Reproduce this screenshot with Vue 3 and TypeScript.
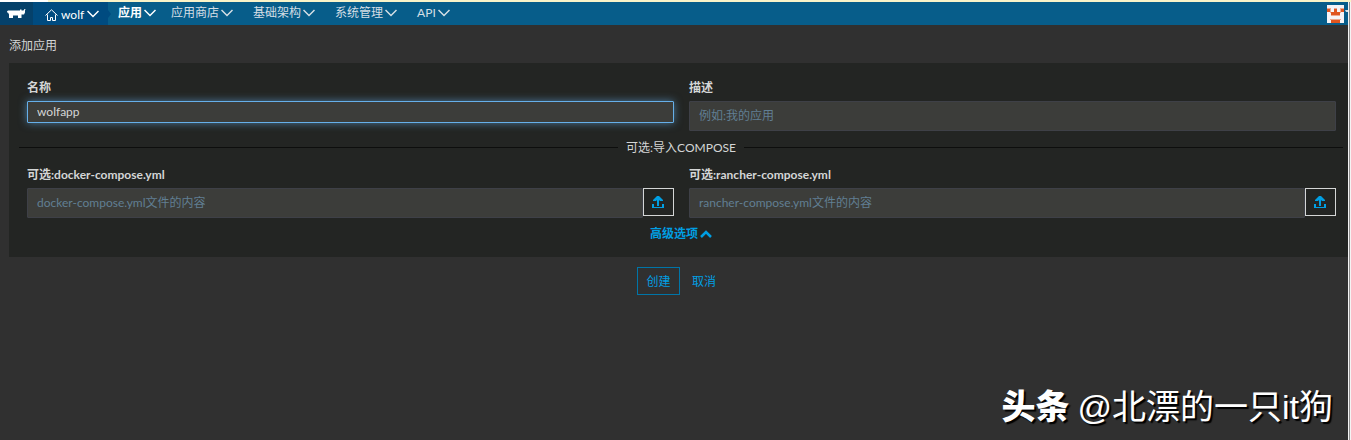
<script setup lang="ts">
import { ref } from 'vue'

interface NavItem {
  label: string
  active?: boolean
}

const navItems: NavItem[] = [
  { label: '应用', active: true },
  { label: '应用商店' },
  { label: '基础架构' },
  { label: '系统管理' },
  { label: 'API' },
]

const name = ref('wolfapp')
const description = ref('')
const dockerCompose = ref('')
const rancherCompose = ref('')
</script>

<template>
  <div class="window">
    <div class="strip"><span class="strip-start"></span></div>
    <div class="page">
      <header class="topbar">
        <a class="logo" href="#" aria-label="Rancher">
          <svg width="19" height="10" viewBox="0 0 19 10" fill="#fff">
            <path d="M0 2.500L1 1.500h12V0.500h1.500V1.500h2L17.500 0H18.500L18 1.500V3.500l-1 2h-2.500V9H11V6.500H6V9H2V5.500L1 3.500H0z" />
          </svg>
        </a>
        <a class="env" href="#">
          <svg width="13" height="12" viewBox="0 0 13 12" fill="none" stroke="#fff">
            <path d="M0.500 6.500L6.500 0.800 12.500 6.500M2.500 5.500v6h3v-3h2v3h3v-6" />
          </svg>
          <span>wolf</span>
          <svg class="chev" width="12" height="8" viewBox="0 0 12 8" fill="none" stroke="currentColor" stroke-width="1.500"><path d="M0.500 1L6 6.500 11.500 1" /></svg>
        </a>
        <nav class="nav">
          <a v-for="item in navItems" :key="item.label" href="#" :class="{ active: item.active }">
            <span>{{ item.label }}</span>
            <svg class="chev" width="12" height="8" viewBox="0 0 12 8" fill="none" stroke="currentColor" stroke-width="1.500"><path d="M0.500 1L6 6.500 11.500 1" /></svg>
          </a>
        </nav>
        <button class="user" type="button" aria-label="user">
          <svg width="17" height="18" viewBox="0 0 17 18">
            <path fill="#f5f3f6" d="M0 0h17v18H0z" />
            <path fill="#eda88e" d="M0 3h17v1H0zM3 4h1v4H3zM13 4h1v4h-1zM4 10h9v1H4zM3 14h11v1H3z" />
            <path fill="#f5f3f6" d="M4 3h3v1H4zM10 3h3v1h-3z" />
            <path fill="#e0551f" d="M0 4h3v3H0zM14 4h3v3h-3zM7 4h3v3H7zM4 7h9v3H4zM4 15h9v3H4z" />
          </svg>
          <svg class="caret" width="3" height="3" viewBox="0 0 3 3"><path fill="#d5e2ea" d="M0 0h3v2H1z" /></svg>
        </button>
      </header>

      <main>
        <h1>添加应用</h1>
        <form class="form" @submit.prevent>
          <section class="panel">
            <div class="row">
              <div class="field">
                <label for="name">名称</label>
                <input id="name" v-model="name" class="box focused" type="text" />
              </div>
              <div class="field">
                <label for="description">描述</label>
                <textarea id="description" v-model="description" class="box area" rows="1" placeholder="例如:我的应用"></textarea>
              </div>
            </div>
            <div class="divider"><span>可选:导入COMPOSE</span></div>
            <div class="row">
              <div class="field">
                <label for="docker">可选:docker-compose.yml</label>
                <div class="group">
                  <textarea id="docker" v-model="dockerCompose" class="box area" rows="1" placeholder="docker-compose.yml文件的内容"></textarea>
                  <button class="upload" type="button" aria-label="docker-compose.yml">
                    <svg width="12" height="12" viewBox="0 0 12 12" fill="#009fe3"><path d="M5 0h2l4 4v1H8L7 4v6H5V4L4 5H1V4l4-4zM0 8h2v3h8V8h2v4H0z" /></svg>
                  </button>
                </div>
              </div>
              <div class="field">
                <label for="rancher">可选:rancher-compose.yml</label>
                <div class="group">
                  <textarea id="rancher" v-model="rancherCompose" class="box area" rows="1" placeholder="rancher-compose.yml文件的内容"></textarea>
                  <button class="upload" type="button" aria-label="rancher-compose.yml">
                    <svg width="12" height="12" viewBox="0 0 12 12" fill="#009fe3"><path d="M5 0h2l4 4v1H8L7 4v6H5V4L4 5H1V4l4-4zM0 8h2v3h8V8h2v4H0z" /></svg>
                  </button>
                </div>
              </div>
            </div>
            <div class="advanced">
              <button type="button">
                <span>高级选项</span>
                <svg width="12" height="8" viewBox="0 0 12 8" fill="none" stroke="currentColor" stroke-width="2.500"><path d="M1 7L6 2l5 5" /></svg>
              </button>
            </div>
          </section>
          <div class="actions">
            <button class="create" type="submit">创建</button>
            <button class="cancel" type="button">取消</button>
          </div>
        </form>
      </main>
    </div>
    <div class="watermark"><b>头条</b><span>@北漂的一只it狗</span></div>
  </div>
</template>

<style>
html,
body {
  background: #303030;
}
</style>

<style scoped>
.window {
  box-sizing: border-box;
  min-height: 100vh;
  position: relative;
  background: #303030;
  color: #d4d6d6;
  font: 12px/16px Lato, "Noto Sans CJK SC", sans-serif;
}
.window::after {
  content: "";
  position: absolute;
  top: 2px;
  right: 0;
  bottom: 0;
  width: 1px;
  border-left: 1px solid #f4f4f4;
  border-right: 1px solid #f4f4f4;
  background: #8c8c8c;
}
.strip {
  height: 2px;
  background: #f9f3c8;
}
.strip-start {
  display: block;
  width: 48px;
  height: 2px;
  background: #fff;
}
.page {
  margin-right: 3px;
}
button {
  font: inherit;
  margin: 0;
  padding: 0;
  border: 0;
  background: none;
  color: #009fe3;
}
a {
  color: #d5dfe5;
  text-decoration: none;
}
svg {
  display: block;
  flex: none;
}
.topbar {
  display: flex;
  height: 23px;
  background: #075d8a;
}
.logo {
  box-sizing: border-box;
  display: flex;
  align-items: center;
  justify-content: center;
  width: 33px;
  padding-top: 1px;
  background: #05416b;
}
.env {
  box-sizing: border-box;
  position: relative;
  display: flex;
  align-items: center;
  gap: 3px;
  width: 75px;
  padding: 3px 0 0 12px;
  background: #004b80;
  color: #fff;
}
.env::after {
  content: "";
  position: absolute;
  top: 8px;
  left: 100%;
  border: 4px solid transparent;
  border-left: 3px solid #004b80;
  border-right: 0;
}
.env .chev {
  margin-bottom: 2px;
}
.nav {
  display: flex;
  gap: 15px;
  padding: 0 0 1px 10px;
}
.nav a {
  display: flex;
  align-items: center;
  gap: 2px;
  padding-right: 5px;
}
.nav .active {
  padding-right: 0;
  color: #fff;
  font-weight: 700;
}
.user {
  position: relative;
  display: flex;
  align-items: center;
  margin-left: auto;
  padding: 1px 4px 0 0;
}
.caret {
  position: absolute;
  top: 8px;
  right: 0;
}
h1 {
  margin: 0;
  padding: 13px 9px 9px;
  font-size: 12px;
  line-height: 16px;
  font-weight: 400;
}
.panel {
  margin-left: 9px;
  padding: 17px 5px 15px 10px;
  background: #232523;
}
.row {
  display: grid;
  grid-template-columns: 1fr 1fr;
  gap: 15px;
  padding: 0 7px 0 8px;
}
.field {
  min-width: 0;
}
label {
  display: block;
  height: 16px;
  margin-bottom: 5px;
  font-weight: 700;
}
.box {
  display: block;
  box-sizing: border-box;
  width: 100%;
  height: 30px;
  margin: 0;
  padding: 6px 9px;
  border: 1px solid #3e4047;
  border-radius: 1px;
  outline: 0;
  background: #3c3d3a;
  color: #d4d6d6;
  font: inherit;
  resize: none;
  overflow: hidden;
}
.box::placeholder {
  color: #617f93;
  opacity: 1;
}
.focused {
  height: 22px;
  padding: 1px 9px 3px;
  border-color: #66afe9;
  box-shadow: 0 0 8px rgba(102, 175, 233, 0.6);
}
.divider {
  display: flex;
  align-items: center;
  gap: 8px;
  height: 16px;
  margin: 8px 0 12px;
}
.divider span {
  padding-top: 2px;
}
.divider::before,
.divider::after {
  content: "";
  flex: 1;
  height: 1px;
  background: #0d0e0d;
}
.group {
  display: flex;
  align-items: flex-start;
}
.upload {
  box-sizing: border-box;
  flex: none;
  display: flex;
  align-items: center;
  justify-content: center;
  width: 31px;
  height: 28px;
  padding-right: 1px;
  border: 1px solid #d4d6d6;
}
.advanced {
  display: flex;
  justify-content: center;
  margin-top: 8px;
}
.advanced button {
  display: flex;
  align-items: center;
  gap: 2px;
  font-weight: 700;
}
.actions {
  display: flex;
  justify-content: center;
  gap: 12px;
  margin-top: 10px;
  padding: 0 5px 0 10px;
}
.actions button {
  padding-top: 2px;
}
.create {
  width: 43px;
  height: 28px;
  border: 1px solid #0075a8;
}
.watermark {
  position: absolute;
  right: 18px;
  bottom: 8px;
  display: flex;
  gap: 8px;
  color: #fff;
  font: 34px/50px "Liberation Sans", "Noto Sans CJK SC", sans-serif;
  text-shadow: 2px 2px 1px #000;
}
.watermark b {
  font-weight: 900;
}
</style>
